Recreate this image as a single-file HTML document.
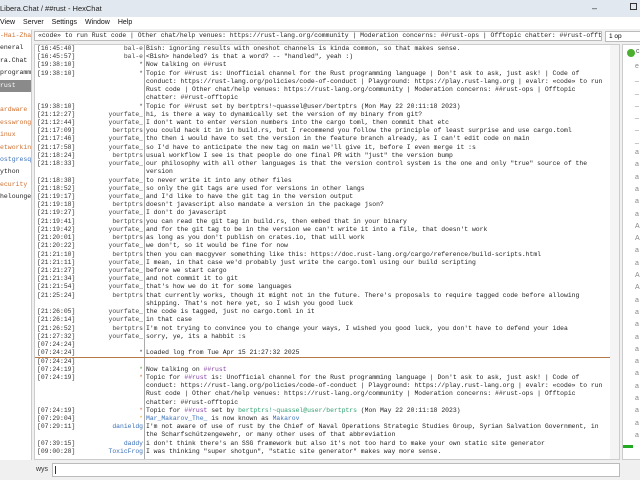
<!DOCTYPE html>
<html><head><meta charset="utf-8"><style>
*{margin:0;padding:0;box-sizing:border-box}
body{width:640px;height:480px;overflow:hidden;background:#f0f0f0;font-family:"Liberation Sans",sans-serif;position:relative}
.abs{position:absolute}
#title{left:0;top:0;width:640px;height:17px;background:#e1e8ef;font-size:7.5px;color:#222;line-height:17px;padding-left:0}
#menu{left:0;top:17px;width:640px;height:12px;background:#fff;font-size:7px;line-height:11px;color:#111}
#menu span{margin-right:8px}
#tree{left:0;top:30px;width:32px;height:430px;background:#fff;font-family:"Liberation Mono",monospace;font-size:6.5px;line-height:12.4px;overflow:hidden;white-space:nowrap;border-right:1px solid #ccc;color:#222}
#topic{left:34px;top:31px;width:568px;height:10px;background:#fff;border:1px solid #bbb;font-family:"Liberation Mono",monospace;font-size:6.4px;line-height:8px;white-space:nowrap;overflow:hidden;color:#222;padding-left:3px}
#op{left:605px;top:31px;width:40px;height:11px;background:#fff;border:1px solid #bbb;font-size:6.5px;line-height:9px;padding-left:3px}
#chat{left:34px;top:44px;width:586px;height:416px;background:#fff;border:1px solid #ccc;overflow:hidden}
#sb{left:610px;top:45px;width:9px;height:414px;background:#f4f4f4}
#vline{left:144px;top:45px;width:1px;height:414px;background:#aaa}
#users{left:622px;top:44px;width:20px;height:416px;background:#fff;border:1px solid #ccc;font-family:"Liberation Sans",sans-serif;font-size:7px;color:#555;overflow:hidden}
.r{position:absolute;left:37px;height:8.22px;font-family:"Liberation Mono",monospace;font-size:6.4px;line-height:8.22px;white-space:pre;color:#222}
.ts{position:absolute;left:0;color:#333}
.nk{position:absolute;width:106px;left:0;text-align:right;color:#444}
.tx{position:absolute;left:109px}
.o{color:#d07030}.g{color:#5aa030}.b{color:#3a70b8}.t{color:#30a070}
#sep{left:35px;top:357px;width:575px;height:1px;background:#b87848}
#input{left:0;top:461px;width:640px;height:19px;background:#f0f0f0}
#ibox{left:52px;top:463px;width:568px;height:14px;background:#fff;border:1px solid #bbb}
</style></head><body>
<div id="title" class="abs">Libera.Chat / ##rust - HexChat</div>
<div class="abs" style="left:592px;top:3px;font-size:9px;color:#333">–</div>
<div class="abs" style="left:630px;top:3px;width:7px;height:7px;border:1px solid #333"></div>
<div id="menu" class="abs"><span>View</span><span>Server</span><span>Settings</span><span>Window</span><span>Help</span></div>
<div id="tree" class="abs">
<div class="o">-Hai-Zhan</div>
<div>eneral</div>
<div>ra.Chat</div>
<div>programm</div>
<div style="background:#8a8a8a;color:#fff">rust</div>
<div>&nbsp;</div>
<div class="o">ardware</div>
<div class="o">esswrong</div>
<div class="o">inux</div>
<div class="o">etworkin</div>
<div class="b">ostgresq</div>
<div>ython</div>
<div class="o">ecurity</div>
<div>helounge</div>
</div>
<div id="topic" class="abs">&laquo;code&raquo; to run Rust code | Other chat/help venues: https://rust-lang.org/community | Moderation concerns: ##rust-ops | Offtopic chatter: ##rust-offtopic</div>
<div id="op" class="abs">1 op</div>
<div id="chat" class="abs"></div>
<div id="sb" class="abs"></div>
<div id="vline" class="abs"></div>
<div id="sep" class="abs"></div>
<div id="users" class="abs">
<div style="position:absolute;left:4px;top:4px;width:8px;height:8px;border-radius:50%;background:#4caf30"></div>
<div style="position:absolute;left:13px;top:3px">c</div>
<div style="position:absolute;left:12px;top:16px;line-height:12.3px;color:#888;font-size:7px">e<br>_<br>_<br>_<br>_<br>_<br>_<br>a<br>a<br>a<br>a<br>a<br>a<br>A<br>A<br>a<br>a<br>A<br>A<br>a<br>a<br>a<br>a<br>a<br>a<br>a<br>a<br>a<br>a<br>a<br>a</div>
<div style="position:absolute;left:0;top:400px;width:10px;height:3px;background:#2a2"></div>
</div>
<div id="input" class="abs"></div>
<div class="abs" style="left:36px;top:466px;font-size:7px;color:#333">wys</div>
<div id="ibox" class="abs"></div>
<div class="abs" style="left:55px;top:466px;width:1px;height:8px;background:#333"></div>

<div class="r" style="top:45.0px"><span class="ts">[16:45:40]</span><span class="nk">bal-e</span><span class="tx">Bish: ignoring results with oneshot channels is kinda common, so that makes sense.</span></div>
<div class="r" style="top:53.2px"><span class="ts">[16:45:57]</span><span class="nk">bal-e</span><span class="tx">&lt;Bish&gt; handeled? is that a word? -- "handled", yeah :)</span></div>
<div class="r" style="top:61.4px"><span class="ts">[19:38:10]</span><span class="nk">*</span><span class="tx">Now talking on ##rust</span></div>
<div class="r" style="top:69.7px"><span class="ts">[19:38:10]</span><span class="nk">*</span><span class="tx">Topic for ##rust is: Unofficial channel for the Rust programming language | Don't ask to ask, just ask! | Code of</span></div>
<div class="r" style="top:77.9px"><span class="tx">conduct: https://rust-lang.org/policies/code-of-conduct | Playground: https://play.rust-lang.org | evalr: «code» to run</span></div>
<div class="r" style="top:86.1px"><span class="tx">Rust code | Other chat/help venues: https://rust-lang.org/community | Moderation concerns: ##rust-ops | Offtopic</span></div>
<div class="r" style="top:94.3px"><span class="tx">chatter: ##rust-offtopic</span></div>
<div class="r" style="top:102.5px"><span class="ts">[19:38:10]</span><span class="nk">*</span><span class="tx">Topic for ##rust set by bertptrs!~quassel@user/bertptrs (Mon May 22 20:11:18 2023)</span></div>
<div class="r" style="top:110.8px"><span class="ts">[21:12:27]</span><span class="nk">yourfate_</span><span class="tx">hi, is there a way to dynamically set the version of my binary from git?</span></div>
<div class="r" style="top:119.0px"><span class="ts">[21:12:44]</span><span class="nk">yourfate_</span><span class="tx">I don't want to enter version numbers into the cargo toml, then commit that etc</span></div>
<div class="r" style="top:127.2px"><span class="ts">[21:17:09]</span><span class="nk">bertptrs</span><span class="tx">you could hack it in in build.rs, but I recommend you follow the principle of least surprise and use cargo.toml</span></div>
<div class="r" style="top:135.4px"><span class="ts">[21:17:46]</span><span class="nk">yourfate_</span><span class="tx">tho then i would have to set the version in the feature branch already, as I can't edit code on main</span></div>
<div class="r" style="top:143.7px"><span class="ts">[21:17:58]</span><span class="nk">yourfate_</span><span class="tx">so I'd have to anticipate the new tag on main we'll give it, before I even merge it :s</span></div>
<div class="r" style="top:151.9px"><span class="ts">[21:18:24]</span><span class="nk">bertptrs</span><span class="tx">usual workflow I see is that people do one final PR with "just" the version bump</span></div>
<div class="r" style="top:160.1px"><span class="ts">[21:18:33]</span><span class="nk">yourfate_</span><span class="tx">our philosophy with all other languages is that the version control system is the one and only "true" source of the</span></div>
<div class="r" style="top:168.3px"><span class="tx">version</span></div>
<div class="r" style="top:176.5px"><span class="ts">[21:18:38]</span><span class="nk">yourfate_</span><span class="tx">to never write it into any other files</span></div>
<div class="r" style="top:184.8px"><span class="ts">[21:18:52]</span><span class="nk">yourfate_</span><span class="tx">so only the git tags are used for versions in other langs</span></div>
<div class="r" style="top:193.0px"><span class="ts">[21:19:17]</span><span class="nk">yourfate_</span><span class="tx">and I'd like to have the git tag in the version output</span></div>
<div class="r" style="top:201.2px"><span class="ts">[21:19:18]</span><span class="nk">bertptrs</span><span class="tx">doesn't javascript also mandate a version in the package json?</span></div>
<div class="r" style="top:209.4px"><span class="ts">[21:19:27]</span><span class="nk">yourfate_</span><span class="tx">I don't do javascript</span></div>
<div class="r" style="top:217.6px"><span class="ts">[21:19:41]</span><span class="nk">bertptrs</span><span class="tx">you can read the git tag in build.rs, then embed that in your binary</span></div>
<div class="r" style="top:225.9px"><span class="ts">[21:19:42]</span><span class="nk">yourfate_</span><span class="tx">and for the git tag to be in the version we can't write it into a file, that doesn't work</span></div>
<div class="r" style="top:234.1px"><span class="ts">[21:20:01]</span><span class="nk">bertptrs</span><span class="tx">as long as you don't publish on crates.io, that will work</span></div>
<div class="r" style="top:242.3px"><span class="ts">[21:20:22]</span><span class="nk">yourfate_</span><span class="tx">we don't, so it would be fine for now</span></div>
<div class="r" style="top:250.5px"><span class="ts">[21:21:10]</span><span class="nk">bertptrs</span><span class="tx">then you can macgyver something like this: https://doc.rust-lang.org/cargo/reference/build-scripts.html</span></div>
<div class="r" style="top:258.8px"><span class="ts">[21:21:11]</span><span class="nk">yourfate_</span><span class="tx">I mean, in that case we'd probably just write the cargo.toml using our build scripting</span></div>
<div class="r" style="top:267.0px"><span class="ts">[21:21:27]</span><span class="nk">yourfate_</span><span class="tx">before we start cargo</span></div>
<div class="r" style="top:275.2px"><span class="ts">[21:21:34]</span><span class="nk">yourfate_</span><span class="tx">and not commit it to git</span></div>
<div class="r" style="top:283.4px"><span class="ts">[21:21:54]</span><span class="nk">yourfate_</span><span class="tx">that's how we do it for some languages</span></div>
<div class="r" style="top:291.6px"><span class="ts">[21:25:24]</span><span class="nk">bertptrs</span><span class="tx">that currently works, though it might not in the future. There's proposals to require tagged code before allowing</span></div>
<div class="r" style="top:299.9px"><span class="tx">shipping. That's not here yet, so I wish you good luck</span></div>
<div class="r" style="top:308.1px"><span class="ts">[21:26:05]</span><span class="nk">yourfate_</span><span class="tx">the code is tagged, just no cargo.toml in it</span></div>
<div class="r" style="top:316.3px"><span class="ts">[21:26:14]</span><span class="nk">yourfate_</span><span class="tx">in that case</span></div>
<div class="r" style="top:324.5px"><span class="ts">[21:26:52]</span><span class="nk">bertptrs</span><span class="tx">I'm not trying to convince you to change your ways, I wished you good luck, you don't have to defend your idea</span></div>
<div class="r" style="top:332.7px"><span class="ts">[21:27:32]</span><span class="nk">yourfate_</span><span class="tx">sorry, ye, its a habbit :s</span></div>
<div class="r" style="top:341.0px"><span class="ts">[07:24:24]</span></div>
<div class="r" style="top:349.2px"><span class="ts">[07:24:24]</span><span class="nk">*</span><span class="tx">Loaded log from Tue Apr 15 21:27:32 2025</span></div>
<div class="r" style="top:357.8px"><span class="ts">[07:24:24]</span></div>
<div class="r" style="top:365.6px"><span class="ts">[07:24:19]</span><span class="nk g">*</span><span class="tx">Now talking on <span style="color:#8040a0">##rust</span></span></div>
<div class="r" style="top:373.9px"><span class="ts">[07:24:19]</span><span class="nk o">*</span><span class="tx">Topic for <span style="color:#8040a0">##rust</span> is: Unofficial channel for the Rust programming language | Don't ask to ask, just ask! | Code of</span></div>
<div class="r" style="top:382.1px"><span class="tx">conduct: https://rust-lang.org/policies/code-of-conduct | Playground: https://play.rust-lang.org | evalr: «code» to run</span></div>
<div class="r" style="top:390.3px"><span class="tx">Rust code | Other chat/help venues: https://rust-lang.org/community | Moderation concerns: ##rust-ops | Offtopic</span></div>
<div class="r" style="top:398.5px"><span class="tx">chatter: ##rust-offtopic</span></div>
<div class="r" style="top:406.7px"><span class="ts">[07:24:19]</span><span class="nk o">*</span><span class="tx">Topic for <span style="color:#8040a0">##rust</span> set by <span class="t">bertptrs!~quassel@user/bertptrs</span> (Mon May 22 20:11:18 2023)</span></div>
<div class="r" style="top:415.0px"><span class="ts">[07:29:04]</span><span class="nk" style="color:#e0b030">*</span><span class="tx"><span class="b">Mar_Makarov_The_</span> is now known as <span class="b">Makarov</span></span></div>
<div class="r" style="top:423.2px"><span class="ts">[07:29:11]</span><span class="nk b">danieldg</span><span class="tx">I'm not aware of use of rust by the Chief of Naval Operations Strategic Studies Group, Syrian Salvation Government, in</span></div>
<div class="r" style="top:431.4px"><span class="tx">the Scharfschützengewehr, or many other uses of that abbreviation</span></div>
<div class="r" style="top:439.6px"><span class="ts">[07:39:15]</span><span class="nk b">daddy</span><span class="tx">i don't think there's an SSG framework but also it's not too hard to make your own static site generator</span></div>
<div class="r" style="top:447.8px"><span class="ts">[09:00:28]</span><span class="nk b">ToxicFrog</span><span class="tx">I was thinking "super shotgun", "static site generator" makes way more sense.</span></div>
</body></html>
